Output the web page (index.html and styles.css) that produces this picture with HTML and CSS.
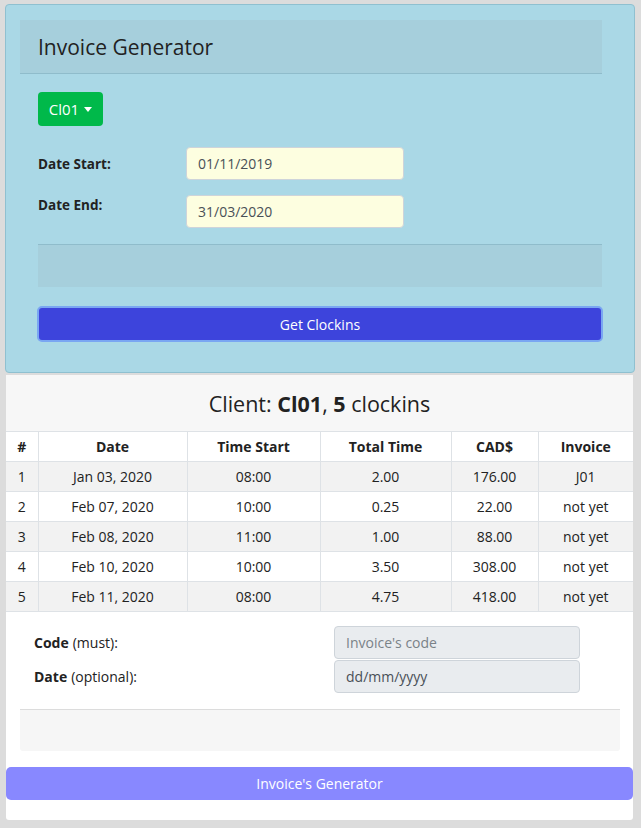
FILE: index.html
```html
<!DOCTYPE html>
<html>
<head>
<meta charset="utf-8">
<link rel="stylesheet" href="styles.css">
</head>
<body>
<div class="wrap">
  <section class="card-blue">
    <div class="card-head"><h1>Invoice Generator</h1></div>
    <div class="card-body">
      <button class="btn-client">Cl01 <span class="caret"></span></button>
      <div class="field field-start">
        <label>Date Start:</label>
        <div class="date-input">01/11/2019</div>
      </div>
      <div class="field field-end">
        <label>Date End:</label>
        <div class="date-input">31/03/2020</div>
      </div>
      <div class="foot-box"></div>
      <button class="btn-get">Get Clockins</button>
    </div>
  </section>
  <section class="card-result">
    <h2 class="result-title">Client: <b>Cl01</b>, <b>5</b> clockins</h2>
    <table class="clock-table">
      <thead>
        <tr><th class="c-num">#</th><th class="c-date">Date</th><th class="c-start">Time Start</th><th class="c-total">Total Time</th><th class="c-cad">CAD$</th><th class="c-inv">Invoice</th></tr>
      </thead>
      <tbody>
        <tr><td>1</td><td>Jan 03, 2020</td><td>08:00</td><td>2.00</td><td>176.00</td><td>J01</td></tr>
        <tr><td>2</td><td>Feb 07, 2020</td><td>10:00</td><td>0.25</td><td>22.00</td><td>not yet</td></tr>
        <tr><td>3</td><td>Feb 08, 2020</td><td>11:00</td><td>1.00</td><td>88.00</td><td>not yet</td></tr>
        <tr><td>4</td><td>Feb 10, 2020</td><td>10:00</td><td>3.50</td><td>308.00</td><td>not yet</td></tr>
        <tr><td>5</td><td>Feb 11, 2020</td><td>08:00</td><td>4.75</td><td>418.00</td><td>not yet</td></tr>
      </tbody>
    </table>
    <div class="inv-form">
      <div class="inv-labels">
        <div class="inv-label"><b>Code</b> (must):</div>
        <div class="inv-label"><b>Date</b> (optional):</div>
      </div>
      <div class="inv-inputs">
        <div class="inv-input placeholder">Invoice's code</div>
        <div class="inv-input">dd/mm/yyyy</div>
      </div>
    </div>
    <div class="inv-box"></div>
    <button class="btn-inv">Invoice's Generator</button>
  </section>
</div>
</body>
</html>
```

FILE: styles.css
```css
* { box-sizing: border-box; }
html, body { margin: 0; }
body {
  background: #dcdcdc;
  font-family: "Open Sans", "Noto Sans", sans-serif;
  color: #212529;
  font-size: 14px;
  height: 828px;
  overflow: hidden;
}
.wrap {
  padding: 4px 6px 0 5px;
  width: 641px;
}
.card-blue {
  background: #aad8e6;
  border: 1px solid #8fc0d0;
  border-radius: 4px;
  padding: 15px 32px 30px 14px;
}
.card-head {
  background: #a6cfdc;
  border-bottom: 1px solid #8fbccb;
  height: 54px;
  padding: 0 18px;
  display: flex;
  align-items: center;
}
.card-head h1 {
  margin: 0;
  font-size: 21px;
  font-weight: 400;
  color: #222;
}
.card-body {
  padding: 18px 0 0 18px;
  display: flex;
  flex-direction: column;
}
.btn-client {
  align-self: flex-start;
  width: 65px;
  height: 34px;
  background: #00b94a;
  color: #fff;
  border: 0;
  border-radius: 4px;
  font-family: inherit;
  font-size: 15px;
  padding: 0;
  display: flex;
  align-items: center;
  justify-content: center;
  gap: 5px;
}
.caret {
  width: 0; height: 0;
  border-left: 4px solid transparent;
  border-right: 4px solid transparent;
  border-top: 5px solid #fff;
  margin-top: 1px;
}
.field {
  display: flex;
  align-items: center;
}
.field label {
  width: 148px;
  font-weight: 700;
  font-size: 13.5px;
  color: #222;
}
.field-start { margin-top: 21px; }
.field-end { margin-top: 15px; align-items: flex-start; }
.field-end label { padding-top: 1px; }
.date-input {
  width: 218px;
  height: 33px;
  background: #fdfee0;
  border: 1px solid #ced4da;
  border-radius: 4px;
  padding: 0 11px;
  display: flex;
  align-items: center;
  color: #495057;
  font-size: 14px;
}
.foot-box {
  margin-top: 16px;
  height: 43px;
  background: #a6cfdc;
  border-top: 1px solid #8fbccb;
}
.btn-get {
  margin-top: 19px;
  height: 36px;
  width: 566px;
  background: #3d44dc;
  color: #fff;
  border: 2px solid #7aa6f2;
  border-radius: 5px;
  font-family: inherit;
  font-size: 14px;
  margin-left: -1px;
}
.card-result {
  margin-top: 2px;
  margin-left: 1px;
  width: 627px;
  background: #fff;
  border-radius: 3px;
  padding-bottom: 20px;
}
.result-title {
  margin: 0;
  background: #f7f7f7;
  height: 56px;
  display: flex;
  align-items: center;
  justify-content: center;
  font-size: 21.5px;
  font-weight: 400;
  color: #222;
  white-space: pre;
}
.result-title b { font-weight: 700; }
.clock-table {
  width: 100%;
  border-collapse: collapse;
  font-size: 14px;
  color: #222;
}
.clock-table th, .clock-table td {
  border: 1px solid #dee2e6;
  text-align: center;
  height: 30px;
  padding: 0;
}
.clock-table th { font-weight: 700; background: #fff; }
.clock-table tbody tr:nth-child(odd) td { background: #f2f2f2; }
.clock-table tr > :first-child { border-left: 0; }
.clock-table tr > :last-child { border-right: 0; }
.c-num { width: 32px; }
.c-date { width: 149px; }
.c-start { width: 133px; }
.c-total { width: 131px; }
.c-cad { width: 87px; }
.inv-form {
  display: flex;
  padding: 14px 0 0 28px;
}
.inv-labels {
  width: 300px;
  display: flex;
  flex-direction: column;
  gap: 1px;
}
.inv-label {
  height: 33px;
  display: flex;
  align-items: center;
  gap: 4px;
  font-size: 14px;
  color: #222;
}
.inv-inputs {
  display: flex;
  flex-direction: column;
  gap: 1px;
}
.inv-input {
  width: 246px;
  height: 33px;
  background: #e9ecef;
  border: 1px solid #ced4da;
  border-radius: 4px;
  padding: 0 11px;
  display: flex;
  align-items: center;
  color: #495057;
  font-size: 14px;
}
.inv-input.placeholder { color: #7a8288; }
.inv-box {
  margin: 16px 13px 0 14px;
  height: 42px;
  background: #f6f6f6;
  border-top: 1px solid #dcdcdc;
  border-radius: 0 0 3px 3px;
}
.btn-inv {
  display: block;
  margin-top: 16px;
  width: 100%;
  height: 33px;
  background: #8888ff;
  color: #fff;
  border: 0;
  border-radius: 5px;
  font-family: inherit;
  font-size: 14px;
}
```
